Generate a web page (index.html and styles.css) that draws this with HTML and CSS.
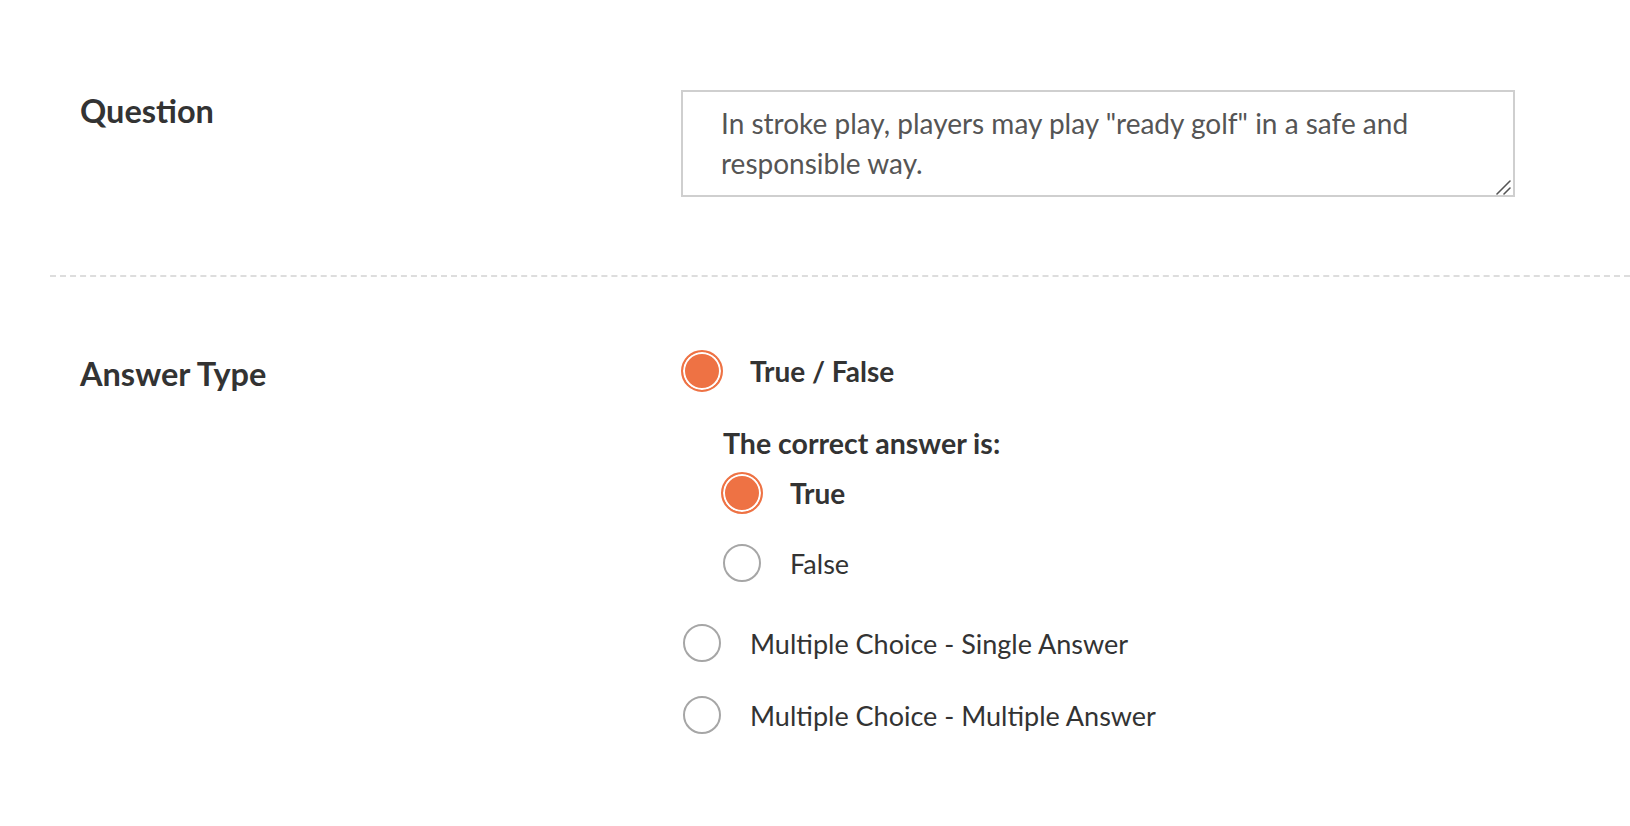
FILE: index.html
```html
<!DOCTYPE html>
<html lang="en">
<head>
<meta charset="utf-8">
<title>Question editor</title>
<link rel="stylesheet" href="styles.css">
</head>
<body>
<div class="page">
  <section class="row row-question">
    <h2 class="label label-question">Question</h2>
    <div class="input-wrap">
      <textarea class="question-input">In stroke play, players may play "ready golf" in a safe and responsible way.</textarea>
      <svg class="resize-grip" width="16" height="16" viewBox="0 0 16 16" aria-hidden="true">
        <path d="M2 15 L15 2" stroke="#555" stroke-width="1.6" stroke-linecap="round"/>
        <path d="M9 15 L15 9" stroke="#555" stroke-width="1.6" stroke-linecap="round"/>
      </svg>
    </div>
  </section>
  <hr class="divider">
  <section class="row row-answer">
    <h2 class="label label-answer">Answer Type</h2>
    <div class="options">
      <div class="option option-tf">
        <span class="radio-slot"><span class="radio checked"></span></span>
        <span class="option-text strong">True / False</span>
      </div>
      <div class="nested">
        <div class="nested-title">The correct answer is:</div>
        <div class="option option-true">
          <span class="radio-slot"><span class="radio checked"></span></span>
          <span class="option-text strong">True</span>
        </div>
        <div class="option option-false">
          <span class="radio-slot"><span class="radio"></span></span>
          <span class="option-text">False</span>
        </div>
      </div>
      <div class="option option-mcs">
        <span class="radio-slot"><span class="radio"></span></span>
        <span class="option-text">Multiple Choice - Single Answer</span>
      </div>
      <div class="option option-mcm">
        <span class="radio-slot"><span class="radio"></span></span>
        <span class="option-text">Multiple Choice - Multiple Answer</span>
      </div>
    </div>
  </section>
</div>
</body>
</html>
```
FILE: styles.css
```css
* { box-sizing: border-box; }

html, body {
  margin: 0;
  padding: 0;
  background: #ffffff;
}

body {
  font-family: Lato, "Open Sans", "Liberation Sans", sans-serif;
  color: #333333;
}

.page {
  width: 1630px;
  height: 826px;
  overflow: hidden;
}

.row {
  display: grid;
  grid-template-columns: 601px 834px;
  padding-left: 80px;
}

.row-question {
  padding-top: 90px;
}

.label {
  margin: 0;
  font-size: 32.5px;
  font-weight: 700;
  line-height: 35px;
  color: #333333;
}

.label-question {
  margin-top: 3px;
}

.input-wrap {
  position: relative;
  width: 834px;
  height: 107px;
}

.question-input {
  display: block;
  width: 834px;
  height: 107px;
  margin: 0;
  padding: 11px 60px 0 38px;
  border: 2px solid #cfcfcf;
  border-radius: 0;
  font-family: Lato, "Open Sans", "Liberation Sans", sans-serif;
  font-size: 28px;
  line-height: 40px;
  color: #555555;
  background: #ffffff;
  resize: none;
  outline: none;
  overflow: hidden;
}

.resize-grip {
  position: absolute;
  right: 4px;
  bottom: 2px;
}

.divider {
  margin: 78px 0 0 50px;
  height: 0;
  border: 0;
  border-top: 2px dashed #dddddd;
}

.row-answer {
  padding-top: 73px;
}

.label-answer {
  margin-top: 6px;
}

.options {
  display: flex;
  flex-direction: column;
}

.option {
  display: flex;
  align-items: center;
  height: 42px;
  gap: 27px;
}

.radio-slot {
  display: flex;
  align-items: center;
  justify-content: center;
  width: 42px;
  height: 42px;
  flex: none;
}

.radio {
  display: block;
  width: 38px;
  height: 38px;
  border-radius: 50%;
  border: 2px solid #a6a6a6;
  background: #ffffff;
}

.radio.checked {
  width: 42px;
  height: 42px;
  border-color: #ee7244;
  background: #ee7244;
  box-shadow: inset 0 0 0 2px #ffffff;
}

.option-text {
  font-size: 27px;
  font-weight: 400;
  color: #333333;
  white-space: nowrap;
}

.option-text.strong {
  font-size: 28px;
  font-weight: 700;
}

.nested {
  display: flex;
  flex-direction: column;
  padding-left: 40px;
  margin-top: 36px;
}

.nested-title {
  font-size: 28.5px;
  font-weight: 700;
  line-height: 30px;
  color: #333333;
  margin-left: 2px;
}

.option-true {
  margin-top: 14px;
}

.option-false {
  margin-top: 28px;
}

.option-mcs {
  margin-top: 38px;
}

.option-mcm {
  margin-top: 30px;
}
```
